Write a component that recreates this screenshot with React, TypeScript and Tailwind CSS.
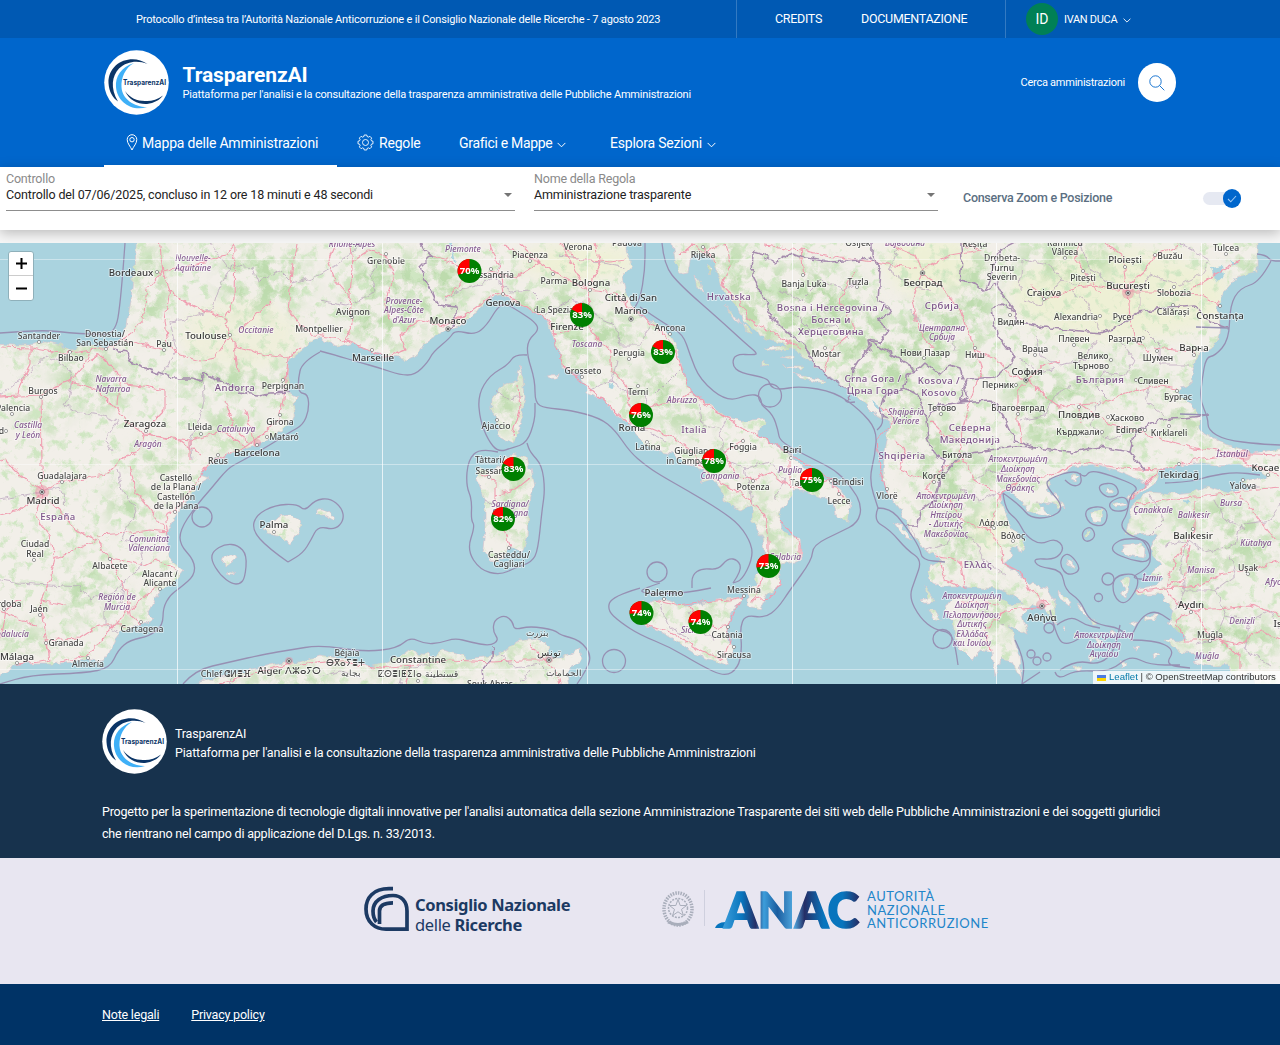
import React from "react";

const LAND = [
  // France, Iberia and the Italian peninsula
  "M136 230L134 270L131 300L127 325L122 337L115 346L106 348L94 345L80 347L70 351L60 345L45 341L30 345L15 345L-10 344L-10 680L10 671L15 664L50 664L73 662L88 659L102 662L108 654L115 639L122 630L143 624L152 619L147 614L155 599L160 590L173 584L184 570L170 559L168 549L167 534L173 520L183 505L197 487L202 482L209 478L200 475L210 465L213 460L233 453L257 445L273 437L290 423L295 413L293 403L298 398L289 393L286 373L288 360L300 352L315 340L320 338L337 347L353 343L370 350L383 355L407 360L418 355L420 348L433 338L447 330L463 323L477 312L487 300L503 295L517 303L535 312L547 320L553 337L560 350L562 367L577 373L585 383L587 393L603 400L613 413L627 423L638 437L648 447L660 452L673 454L682 463L693 467L703 470L706 477L699 483L712 479L722 490L723 500L740 510L752 505L753 522L762 537L764 552L762 565L755 577L758 584L748 592L748 606L760 609L767 595L780 584L782 565L802 560L800 539L780 530L778 517L787 502L793 490L803 490L820 497L833 502L835 514L847 521L851 504L840 490L823 479L800 465L792 457L773 443L757 435L757 430L767 423L763 418L743 422L728 418L712 407L690 392L683 370L677 347L670 335L653 322L640 317L633 307L625 290L622 277L632 267L627 250L627 230Z",
  // Balkans, Greece, Anatolia
  "M670 230L672 243L675 260L682 273L688 272L690 260L700 253L713 260L717 273L723 290L737 307L743 320L763 337L783 343L800 353L817 368L840 383L857 397L873 413L890 423L887 440L884 457L883 475L887 492L900 509L907 524L913 532L923 549L943 560L930 565L928 579L942 587L960 587L997 589L1012 595L1024 603L1010 604L997 597L975 595L952 598L944 610L952 620L955 635L960 649L973 662L980 649L992 652L995 677L1001 659L1012 662L1022 681L1019 655L1015 642L1010 625L1027 634L1022 615L1033 604L1045 608L1056 625L1054 600L1047 588L1030 584L1017 573L1003 563L1012 558L1010 545L1022 553L1026 545L1013 529L1003 509L1000 495L1007 489L1020 499L1028 511L1053 517L1037 502L1052 504L1064 508L1056 495L1047 490L1050 480L1073 467L1093 465L1117 470L1148 484L1132 494L1128 500L1156 483L1160 469L1200 462L1215 465L1237 464L1260 470L1268 476L1256 480L1240 483L1260 486L1227 492L1205 486L1193 492L1173 494L1147 492L1132 505L1127 535L1157 534L1149 549L1160 565L1149 575L1163 578L1157 586L1135 590L1136 594L1160 594L1173 609L1168 625L1188 637L1180 641L1165 640L1180 653L1210 654L1193 662L1213 666L1227 665L1237 679L1250 672L1265 700L1300 700L1300 449L1280 449L1253 453L1223 443L1200 430L1200 417L1190 403L1177 393L1180 387L1192 383L1193 370L1197 355L1217 343L1220 327L1218 307L1223 293L1237 277L1257 272L1257 230Z",
  // North Africa
  "M190 700L200 682L220 677L253 669L283 662L300 662L320 655L347 659L360 662L370 667L383 664L403 654L410 649L420 654L437 655L443 649L460 654L467 659L497 655L507 649L520 640L537 638L550 647L547 659L560 659L580 649L582 659L567 672L570 700Z",
  // Sicily, Corsica, Sardinia
  "M655 600L648 604L642 599L632 605L632 615L640 625L653 627L677 642L692 652L707 659L720 662L727 665L728 659L735 649L728 640L728 629L730 615L743 597L720 599L697 605L680 605L667 600Z",
  "M520 365L523 380L525 397L520 427L513 444L500 437L497 420L492 410L492 397L503 385L517 380Z",
  "M513 453L527 458L530 469L534 487L528 509L527 539L522 552L510 547L502 559L492 562L483 549L485 529L485 499L477 479L480 469L493 472Z",
  // Balearics
  "M263 530L277 517L290 515L303 524L290 545L277 535Z",
  "M317 509L324 509L333 515L334 520L325 515L317 515Z",
  "M223 559L235 554L237 558L227 566L222 563Z",
  "M228 573L230 571L235 574L230 574Z",
  "M546 376L558 374L556 378L548 379Z",
  // Ionian and Aegean islands
  "M893 522L900 524L912 540L904 537Z",
  "M920 600L927 598L925 586L930 596L935 603L924 603Z",
  "M929 610L935 610L941 620L934 618Z",
  "M1073 474L1079 476L1077 482L1072 480Z",
  "M1105 488L1112 488L1114 492L1106 492Z",
  "M1113 503L1122 501L1126 505L1116 507Z",
  "M1090 513L1103 511L1102 522L1092 521Z",
  "M1086 533L1089 532L1089 537L1086 537Z",
  "M1123 545L1140 543L1145 550L1144 559L1129 556L1121 551Z",
  "M1120 580L1129 578L1126 597L1121 594L1124 587Z",
  "M1067 558L1071 561L1075 568L1069 565Z",
  "M1077 605L1083 608L1089 617L1082 613Z",
  "M1090 618L1098 623L1093 624Z",
  "M1145 617L1158 614L1156 619L1146 620Z",
  "M1129 624L1138 622L1134 627Z",
  "M1057 590L1072 602L1070 607L1058 597Z",
  "M1064 624L1067 630L1063 627ZM1075 633L1080 637L1076 638ZM1095 638L1103 642L1098 647ZM1110 630L1117 633L1111 636ZM1136 645L1140 648L1135 650ZM1153 654L1160 655L1154 659ZM1090 655L1096 659L1089 662ZM1120 660L1128 664L1121 667ZM1075 665L1083 668L1076 671Z",
  // Dalmatian islands
  "M695 275L699 281L704 296L698 287ZM706 262L713 270L711 275ZM725 305L741 325L735 320ZM742 322L752 333L746 331ZM765 349L790 346L790 350L770 352ZM780 357L794 356L794 359ZM782 366L804 366L801 369ZM794 374L825 381L822 384L800 378ZM762 362L768 364L762 366ZM910 525L917 540L911 534Z",
];

const WATER =
  "M872 402L880 405L884 412L876 408ZM1212 268L1222 266L1224 276L1216 283ZM1110 476L1116 474L1116 478ZM448 243L454 262L456 262L451 243ZM610 382L614 383L613 388L609 386ZM1036 613L1040 613L1038 616ZM1230 260L1238 262L1234 266ZM1182 500L1190 501L1185 504Z";

const BORDERS = [
  "M113 350L127 352L130 362L150 370L163 375L175 378L192 378L201 381L203 373L225 382L240 392L256 395L270 393L290 392",
  "M413 230L424 250L432 256L420 268L430 288L438 305L456 307L456 320L448 330",
  "M753 252L764 255L775 263L790 253L800 257L830 262L860 260L870 258L880 270L878 300L892 312L878 320L888 330L880 342L868 340L870 350L858 360L852 370L848 390L850 400",
  "M753 252L752 275L765 300L770 315L785 330L805 345L812 362L830 378L848 390",
  "M868 340L885 350L910 365L915 372L906 376L905 388L885 395L880 410L887 420",
  "M915 372L925 362L940 375L950 365L960 368L968 398L960 402",
  "M960 402L940 405L926 418L928 440L935 455L945 460L940 480L935 500L920 510L918 525L907 525",
  "M905 388L918 395L926 418",
  "M940 480L960 455L990 450L1015 447L1035 448",
  "M960 402L990 400L1003 415L1015 440L1035 448L1070 452L1100 447L1130 452L1135 432L1160 420L1185 418L1208 415",
  "M872 230L872 255L880 270",
  "M960 402L966 380L995 378L1015 358L997 335L992 310L1000 303L1016 312L1016 322L1050 328L1100 333L1118 327L1140 312L1170 307L1195 305L1210 322L1228 328",
  "M960 280L975 283L985 291L997 284L1003 296L1016 312",
  "M960 230L962 260L960 280",
  "M493 646L492 658L482 670L484 690",
  "M1130 452L1140 465L1145 470",
  "M1020 240L1000 250L985 291",
];

const REGIONS = [
  "M210 243L230 270L232 265L218 290L212 310L185 320L170 322L176 350L162 375",
  "M232 265L253 268L258 283L280 270L293 283L320 275L345 260L360 243",
  "M203 373L204 400L198 425L190 440L192 460",
  "M0 395L30 372L45 355L65 365L72 378L68 400L65 405L80 412L100 415L118 420L105 440L112 452",
  "M0 500L25 495L60 488L66 505M118 470L122 490L135 510L122 540L140 545L143 565L125 580L118 590L90 600L80 587L50 585L20 583L0 580",
  "M125 580L122 600L105 610L105 625L118 633",
  "M320 300L345 305L360 300L375 290L370 275L380 262",
  "M500 260L495 280L510 292L530 290L540 300M495 275L480 285L460 290L445 300M560 255L600 262L625 268M545 315L570 300L590 305L600 320L615 325L620 345L640 345L650 325",
  "M590 390L612 380L617 360M612 380L625 392L645 395L650 410L640 428L665 440M655 395L665 385L680 370M700 405L702 425L720 430L728 418M720 430L725 460L745 468L750 490L752 505M745 468L770 462L785 480L775 500",
  "M690 612L700 630L715 640M660 605L668 625L690 640",
  "M780 290L800 300L820 280L845 290L860 280M790 310L810 330L835 325L850 340M900 243L890 270L910 285L930 290M910 310L925 330L950 330L955 350",
  "M1020 290L1022 260L1050 265L1062 280L1080 285L1090 270L1080 243M1070 290L1085 300L1100 330M1062 280L1040 305L1025 300M1090 270L1115 285L1140 290L1150 275L1180 285L1200 275L1210 260L1180 243M1140 290L1140 312M1120 340L1135 360L1125 375L1105 372L1095 385L1110 400M1035 335L1040 355L1060 365L1085 360L1095 340M1145 330L1160 345L1160 365L1190 365M1018 358L1040 372L1055 368M1100 400L1090 425L1110 440L1130 432M1150 380L1145 400L1165 415M1020 420L1045 415L1055 395L1070 385",
  "M1150 495L1165 520L1150 535M1165 545L1190 540L1205 552L1235 545L1240 525L1270 520L1280 505M1190 540L1180 560L1185 590L1215 590L1235 575L1230 555M1185 590L1175 610M1215 590L1225 615L1250 620L1270 610L1280 630M1225 615L1215 640L1195 645M1215 500L1225 520L1245 530M1250 620L1245 650L1270 665",
  "M960 490L980 500L1000 492M925 550L945 545L955 530L975 540L985 560L1005 575M960 620L985 612L1005 625M975 480L990 470L1010 475",
  "M230 684L235 672M320 676L340 670L360 678M400 684L405 668L430 665M500 655L515 668L540 664L552 676M520 684L530 670",
  "M485 500L500 508L528 505M495 390L510 400L522 395",
];

const ROADS = [
  "M158 230L163 272L147 290L143 320L130 335L113 346",
  "M163 272L170 290L185 302L205 312L225 318L230 335L238 348L265 355L287 358L300 348",
  "M170 290L165 320L168 345L180 355L200 361L215 358L230 335M125 340L165 350",
  "M163 272L180 268L225 255L235 243L234 300L225 318M240 330L270 302M297 243L292 270L288 310L300 325L315 335L345 340",
  "M235 345L238 372M287 358L285 380L284 400L280 418L262 435L245 447L225 455L213 462",
  "M0 347L30 348L60 353L80 352L100 348L113 348M30 345L30 365L20 385L18 395L0 396",
  "M88 352L85 365L72 380L50 388L42 395L0 397M72 382L100 392L115 407L125 420L145 435L190 440L225 432L245 447M88 362L100 355L120 375L117 405",
  "M145 430L165 410L165 390L145 386L125 384M145 432L140 450L120 460L105 475L60 482L43 492",
  "M43 492L42 465L41 395M43 492L20 475L5 460L0 462M43 492L20 510L0 515M43 492L35 515L50 535L55 558L50 580L40 600L45 630L50 660L40 662L15 664",
  "M43 495L60 510L75 530L97 540L110 558L118 575L128 595L130 615L142 625M97 535L130 533L150 530L168 532M55 558L75 550L97 540M110 558L145 565L155 560L180 572",
  "M168 535L165 515L175 510L195 485L210 462M130 465L135 490L150 510L165 530M145 435L180 440L200 455M190 440L190 460",
  "M158 585L140 600L120 620L100 640L88 655L60 662M45 640L80 638L100 625L125 625M0 610L20 620L35 625M45 640L48 655M40 600L65 605M20 600L5 610L0 640",
  "M245 410L252 430L255 445M225 400L235 430L250 443",
  "M350 243L352 270L350 295L352 325L345 340L370 350L385 358L405 350L400 335L420 320L445 325L470 312M335 243L328 260L335 280L352 300M387 257L370 250L352 262M387 257L395 275L385 300L390 320",
  "M469 271L450 262L430 255M469 271L490 272L515 278L540 262L530 260L505 245M469 271L455 290L445 298M503 293L500 270L490 245M503 293L490 297L475 308L455 322M503 293L520 303L548 320L555 335L570 330L582 320L590 300L587 290L560 275L540 262L520 243",
  "M587 290L615 293L630 308L650 322L665 335L675 350L683 370L690 390L710 408L730 420L745 430L775 443L792 455L820 472L840 485",
  "M587 290L600 265L595 243M587 290L575 270L565 250M560 243L575 258L610 262L625 260M582 320L595 335L610 350L612 370L625 385L632 410L630 425L615 412L600 398L580 380L563 365L556 345L553 330",
  "M632 420L650 428L672 437L692 450L700 465L715 480L735 490L750 500L765 515L768 540L768 560L762 580L752 600L770 598L782 580",
  "M700 465L725 452L745 440M632 415L655 405L680 400L690 392M725 452L735 475L750 480L770 472L790 487L810 488L830 480L845 500M790 460L790 487M778 520L790 530L800 545L800 560",
  "M655 600L675 605L700 602L730 600L743 597L735 610L728 625L730 640L725 655M690 605L695 620L715 628L728 625M640 605L640 622L670 632L700 650L722 660",
  "M482 475L495 480L495 500L502 525L510 547M495 495L515 490L530 478M518 385L520 410L512 435",
  "M694 243L703 253L725 243M694 243L680 255M725 243L730 265L722 285L738 300L750 320L775 335L800 348M703 247L715 262",
  "M765 245L800 250L840 258L875 262L915 268M922 270L950 255L980 250L960 243M922 270L915 255L885 243M922 274L912 300L918 330L935 350M922 274L940 285L960 310L975 350L982 370L970 400L962 430L960 455L975 480L1000 495M803 275L800 250M845 310L855 330L830 350L825 372M855 330L840 300L855 270",
  "M975 350L995 358L1010 375L1027 380L1050 400L1060 407L1080 404L1105 402L1130 392L1160 385L1177 388M1027 380L1045 365L1060 362M1027 380L1018 390L1018 420L1022 445M1080 404L1110 425L1140 432L1165 440L1195 448L1230 453L1280 455M1155 348L1195 352M1078 407L1080 425",
  "M1045 300L1070 290L1090 285L1130 292L1165 292L1200 295L1220 305M1045 298L1030 285M1128 292L1125 270L1122 255L1105 243M1128 292L1130 318L1135 340L1150 352M1128 285L1150 265L1155 255L1180 245M1100 293L1090 278L1075 260L1080 243M1190 290L1215 275L1240 260",
  "M960 460L940 470L925 490L950 500L960 520L990 530L1000 495M990 530L1000 545L1003 563L1020 572L1030 590L1050 605L1035 608L1005 610L985 630L990 650M1000 495L1020 480L1050 475L1080 462L1120 468L1160 470L1195 460L1230 455M960 587L945 580L940 560M935 555L960 560L965 590M960 602L1000 604",
  "M1130 500L1150 480L1160 470M1135 505L1165 500L1195 497L1230 494L1250 490L1280 487M1195 500L1195 530L1175 560L1165 590L1180 605L1195 610L1230 608L1250 605L1280 615M1135 592L1165 588L1200 585L1220 575L1250 570L1280 560M1190 545L1185 580L1168 585M1190 612L1175 620L1185 640L1215 640L1240 645L1260 630L1280 640M1240 495L1260 520L1275 540M1230 453L1250 465L1280 475M1195 610L1205 630L1240 655L1240 670",
  "M877 440L880 470L888 495M877 440L895 420L880 405M930 420L945 435L960 440M895 440L905 450L900 470L925 480",
  "M290 663L260 672L220 684M300 665L325 662L345 662L380 668L410 665L450 660L495 662L520 660L545 660L555 668L560 684M545 660L530 645M410 665L405 684",
];

const MARITIME = [
  "M125 243L121 300L115 335L90 334L70 333L45 330L0 333",
  "M320 352L302 362L298 380L299 393L308 394L309 410L303 425L290 432L270 445L240 462L228 468L210 490L195 507L180 530L180 545L194 560L195 575L180 588L170 595L163 608L163 625L150 636L130 640L118 650L110 668L85 673L30 675L0 684",
  "M320 351L335 355L358 362L380 368L400 375L415 375L428 362L433 352L450 338L455 330L475 335L487 325L497 308L505 303L520 312L535 322L539 330L528 340L527 355L535 380L535 403L545 408L570 410L600 418L615 430L630 452L645 465L660 475L690 492L720 510L740 525L752 545L752 560L742 580L733 583",
  "M527 355L515 354L508 365L490 375L478 395L480 420L488 440L498 452L512 448L527 443L535 420L535 403",
  "M498 452L480 448L468 460L466 485L472 500L471 520L475 526L467 550L480 570L500 575L515 568L532 562L538 550L542 510L545 490L542 465L530 452L527 443",
  "M288 562L268 548L252 530L256 515L275 505L297 504L305 511L315 500L330 498L342 508L344 520L335 530L318 526L311 540L303 553L288 562",
  "M232 584L220 575L211 560L213 551L225 544L238 545L247 555L245 578L240 584Z",
  "M183 684L195 670L230 662L265 654L290 650L320 645L365 652L398 648L410 637L425 644L440 643L455 638L470 642L490 646L499 640L493 632L494 620L505 615L513 622L514 630L530 626L555 630L560 635L580 640L592 656L585 672L577 684",
  "M660 583L645 588L640 592L655 594L685 593L711 588M733 583L742 570L738 560L728 558L718 570L702 568L692 575L692 588",
  "M640 588L612 596L607 610L620 622L640 635L670 647L700 665L725 677L738 668L742 650L740 628L745 615L765 618L778 608L790 590L812 560L813 545L840 532L858 523L862 505L850 485L835 470L815 460L780 442L778 430L773 415L762 405",
  "M635 307L640 300L645 270L645 243M662 243L664 265L680 285L720 320L745 343L757 353L755 355L735 354L732 365L740 373L768 378L770 386L778 390L800 386L835 392L860 410L877 430L875 455L869 480L878 508",
  "M640 307L665 324L683 334L690 355L700 380L727 402L750 394L760 396L762 405M855 402L848 403L845 400",
  "M877 430L883 425L882 415M878 508L873 520L890 530L907 550L922 560L915 580L909 597L920 618L935 630L950 632L955 645L958 665M878 508L890 508L905 525L920 548L922 560L945 562",
  "M1003 493L1005 510L1018 520L1025 535L1040 545L1055 538L1065 548L1055 560L1033 558L1038 567L1062 570L1065 590L1080 600L1088 618L1100 625L1120 628L1130 640L1140 618L1155 610L1170 620M1003 493L1020 505L1030 518L1050 518L1065 508L1045 485L1050 478L1075 470L1085 478L1090 470L1110 475L1140 487L1130 495L1127 515L1120 525L1128 535L1145 540L1152 560L1145 570L1130 578L1150 580",
  "M1065 480L1072 487L1082 484L1080 473M1100 484L1115 483L1120 495L1107 498L1099 490ZM1108 502L1126 495L1130 510L1112 512ZM1084 508L1108 506L1106 527L1088 524ZM1082 531L1091 526L1096 536L1089 542L1083 540ZM1113 544L1125 538L1150 540L1151 563L1130 560L1112 552ZM1113 576L1136 573L1139 586L1125 606L1113 596ZM1062 556L1070 553L1082 570L1068 576L1060 566Z",
  "M1057 625L1070 615L1085 625L1100 628M1015 640L1025 660L1022 684M1050 610L1057 640L1068 645L1085 635M1060 670L1075 660L1100 665L1115 650L1120 625M1130 640L1155 640L1175 650L1165 665L1190 668M1055 672L1058 680L1075 670L1110 672L1130 655L1150 665L1180 665",
  "M1257 254L1266 255L1271 261L1280 261M1271 261L1260 282L1240 288L1230 305L1229 340L1215 356L1206 357L1202 380L1200 400L1208 418L1208 430L1225 440L1260 444L1280 445M1196 327L1229 328M1208 415L1180 414",
  "M1165 483L1190 482L1210 476L1235 472L1260 475M1022 684L1040 672",
];

const CIRCLES: [number, number, number][] = [
  [202, 517, 10], [657, 572, 10], [770, 395.5, 11.5], [614, 661, 11.5], [942.5, 639, 9.5],
  [1108, 579, 6], [1098.5, 597.5, 4], [1031, 654, 4], [1037, 661, 4], [1047, 657, 4], [1049, 628, 5],
];

type Kind = "c" | "b" | "r" | "n";
const LABELS: [string, number, number, Kind][] = [
  ["Bordeaux", 131, 276, "b"], ["Nouvelle-", 193, 261, "r"], ["Aquitaine", 193, 271, "r"], ["Toulouse", 206, 339, "b"],
  ["Occitanie", 256, 333, "r"], ["Montpellier", 319, 332, "c"], ["Santander", 39, 339, "c"], ["Donostia/", 105, 337, "c"],
  ["San Sebastián", 105, 346, "c"], ["Bilbao", 71, 361, "c"], ["Pau", 164, 347, "c"], ["Navarra", 111, 382, "r"],
  ["Nafarroa", 113, 392, "r"], ["Andorra", 235, 391, "n"], ["Perpignan", 283, 389, "c"], ["Burgos", 43, 394, "c"],
  ["Palencia", 13, 411, "c"], ["Castilla", 28, 428, "r"], ["y León", 28, 438, "r"], ["Valladolid", -16, 434, "c"],
  ["Zaragoza", 145, 427, "b"], ["Lleida", 200, 430, "c"], ["Catalunya", 236, 432, "r"], ["Girona", 280, 425, "c"],
  ["Aragón", 148, 447, "r"], ["Mataró", 284, 440, "c"], ["Barcelona", 257, 456, "b"], ["Reus", 218, 464, "c"],
  ["Guadalajara", 62, 479, "c"], ["Castelló", 176, 481, "c"], ["de la Plana /", 176, 490, "c"], ["Castellón", 176, 500, "c"],
  ["de la Plana", 176, 509, "c"], ["Madrid", 43, 504, "b"], ["España", 58, 520, "n"], ["Palma", 274, 528, "b"],
  ["Comunitat", 149, 542, "r"], ["Valenciana", 149, 551, "r"], ["Ciudad", 35, 547, "c"], ["Real", 35, 557, "c"],
  ["Albacete", 110, 569, "c"], ["Alacant /", 160, 577, "c"], ["Alicante", 160, 586, "c"], ["Región de", 117, 600, "r"],
  ["Murcia", 117, 610, "r"], ["Córdoba", 4, 607, "c"], ["Jaén", 39, 612, "c"], ["Andalucía", 10, 637, "r"],
  ["Cartagena", 142, 632, "c"], ["Granada", 66, 646, "c"], ["Málaga", 17, 660, "b"], ["Almería", 88, 667, "c"],
  ["Béjaïa", 347, 656, "c"], ["ⴱⴳⴰⵢⴻⵜ", 345, 666, "c"], ["بجاية", 351, 676, "c"], ["Alger ⴷⵣⴰⵢⵔ", 289, 674, "b"],
  ["Chlef ⵛⵍⴻⴼ", 226, 677, "c"], ["Constantine", 418, 663, "b"], ["ⵇⵙⴻⵏⵟⵉⵏⴰ قسنطينة", 418, 677, "c"], ["بنزرت", 537, 636, "c"],
  ["تونس", 549, 656, "b"], ["الحمامات", 564, 676, "c"], ["Souk Ahras", 490, 687, "c"],
  ["Rhône-Alpes", 352, 247, "r"], ["Grenoble", 386, 264, "c"], ["Piemonte", 463, 252, "r"], ["Piacenza", 530, 258, "c"],
  ["Verona", 578, 250, "c"], ["Padova", 627, 246, "c"], ["Alessandria", 490, 278, "c"], ["Parma", 554, 284, "c"],
  ["Bologna", 591, 286, "b"], ["Genova", 503, 306, "b"], ["Provence-", 404, 304, "r"], ["Alpes-Côte", 404, 313, "r"],
  ["d'Azur", 404, 323, "r"], ["Avignon", 353, 315, "c"], ["Monaco", 448, 324, "b"], ["Marseille", 373, 361, "b"],
  ["La Spezia", 555, 313, "c"], ["Firenze", 567, 330, "b"], ["Toscana", 587, 347, "r"], ["Città di San", 631, 301, "b"],
  ["Marino", 631, 314, "b"], ["Perugia", 629, 356, "c"], ["Grosseto", 583, 374, "c"], ["Terni", 638, 395, "c"],
  ["Ancona", 670, 331, "c"], ["Abruzzo", 682, 403, "r"], ["Roma", 632, 431, "b"], ["Italia", 694, 433, "n"],
  ["Latina", 648, 450, "c"], ["Ajaccio", 496, 429, "c"], ["Tàttari/", 490, 463, "c"], ["Sassari", 490, 474, "c"],
  ["Sardigna/", 510, 507, "r"], ["Sardegna", 510, 516, "r"], ["Casteddu/", 509, 558, "c"], ["Cagliari", 509, 567, "c"],
  ["Giugliano", 694, 454, "c"], ["in Campania", 692, 464, "c"], ["Campania", 720, 479, "r"], ["Foggia", 743, 450, "c"],
  ["Bari", 792, 453, "b"], ["Puglia", 790, 473, "r"], ["Potenza", 753, 490, "c"], ["Taranto", 806, 486, "c"],
  ["Brindisi", 848, 485, "c"], ["Lecce", 839, 504, "c"], ["Calabria", 785, 560, "r"], ["Palermo", 664, 596, "b"],
  ["Messina", 744, 593, "c"], ["Sicilia", 692, 633, "r"], ["Catania", 727, 638, "c"], ["Siracusa", 734, 658, "c"],
  ["Rijeka", 703, 258, "c"], ["Hrvatska", 729, 300, "n"], ["Banja Luka", 804, 287, "c"], ["Tuzla", 858, 285, "c"],
  ["Osijek", 858, 246, "c"], ["Војводина", 905, 246, "r"], ["Београд", 923, 286, "b"], ["Bosna i Hercegovina /", 831, 311, "n"],
  ["Босна и", 831, 323, "n"], ["Херцеговина", 831, 335, "n"], ["Србија", 942, 309, "n"], ["Централна", 942, 331, "r"],
  ["Србија", 942, 340, "r"], ["Mostar", 826, 357, "c"], ["Нови Пазар", 925, 356, "c"], ["Crna Gora /", 873, 382, "n"],
  ["Црна Гора", 873, 394, "n"], ["Kosova /", 939, 384, "n"], ["Kosovo", 939, 396, "n"], ["Тетово", 942, 411, "c"],
  ["Shqipëria", 906, 415, "r"], ["Veriore", 906, 424, "r"], ["Северна", 970, 431, "n"], ["Македонија", 970, 443, "n"],
  ["Shqipëria", 902, 459, "n"], ["Битола", 957, 458, "c"], ["Korçë", 934, 479, "c"], ["Vlorë", 887, 499, "c"],
  ["Αποκεντρωμένη", 946, 499, "r"], ["Διοίκηση", 946, 508, "r"], ["Ηπείρου", 946, 518, "r"], ["- Δυτικής", 946, 527, "r"],
  ["Μακεδονίας", 946, 537, "r"], ["Λάρισα", 994, 526, "c"], ["Βόλος", 1013, 539, "c"], ["Ελλάς", 978, 568, "n"],
  ["Αποκεντρωμένη", 972, 599, "r"], ["Διοίκηση", 972, 608, "r"], ["Πελοποννήσου,", 972, 618, "r"], ["Δυτικής", 972, 627, "r"],
  ["Ελλάδας", 972, 637, "r"], ["και Ιονίου", 972, 646, "r"], ["Αθήνα", 1042, 621, "b"], ["Αποκεντρωμένη", 1104, 638, "r"],
  ["Διοίκηση", 1104, 648, "r"], ["Αιγαίου", 1104, 657, "r"], ["Αποκεντρωμένη", 1018, 462, "r"], ["Διοίκηση", 1018, 472, "r"],
  ["Μακεδονίας", 1018, 482, "r"], ["Θράκης", 1020, 491, "r"],
  ["Reșița", 975, 247, "c"], ["Drobeta-", 1002, 261, "c"], ["Turnu", 1002, 271, "c"], ["Severin", 1002, 280, "c"],
  ["Râmnicu", 1065, 246, "c"], ["Vâlcea", 1065, 255, "c"], ["Ploiești", 1125, 263, "b"], ["Buzău", 1170, 259, "c"],
  ["Tulcea", 1226, 251, "c"], ["Pitești", 1083, 281, "c"], ["București", 1128, 289, "b"], ["Craiova", 1044, 296, "b"],
  ["Slobozia", 1174, 296, "c"], ["Călărași", 1173, 315, "c"], ["Constanța", 1220, 319, "b"], ["Видин", 1011, 325, "c"],
  ["Alexandria", 1076, 320, "c"], ["Русе", 1122, 320, "c"], ["Плевен", 1074, 342, "c"], ["Разград", 1125, 342, "c"],
  ["Враца", 1035, 352, "c"], ["Варна", 1194, 351, "b"], ["Ниш", 975, 358, "c"], ["Велико", 1093, 359, "c"],
  ["Търново", 1091, 369, "c"], ["Шумен", 1158, 361, "c"], ["София", 1027, 375, "b"], ["Перник", 998, 388, "c"],
  ["България", 1100, 383, "n"], ["Сливен", 1153, 384, "c"], ["Бургас", 1178, 400, "c"], ["Благоевград", 1018, 411, "c"],
  ["Пловдив", 1079, 418, "b"], ["Хасково", 1127, 421, "c"], ["Кърджали", 1078, 435, "c"], ["Edirne", 1129, 433, "c"],
  ["Kırklareli", 1169, 436, "c"], ["İstanbul", 1232, 457, "r"], ["Tekirdağ", 1179, 478, "b"], ["Kocaeli", 1268, 471, "b"],
  ["Yalova", 1243, 489, "c"], ["Çanakkale", 1153, 513, "r"], ["Bursa", 1231, 506, "r"], ["Balıkesir", 1194, 518, "r"],
  ["Balıkesir", 1193, 539, "b"], ["Kütahya", 1256, 546, "r"], ["Manisa", 1201, 573, "r"], ["Uşak", 1248, 571, "c"],
  ["İzmir", 1152, 581, "r"], ["Afyon", 1276, 585, "r"], ["Aydın", 1191, 608, "b"], ["Denizli", 1242, 624, "r"],
  ["Isparta", 1290, 627, "b"], ["Muğla", 1210, 638, "c"], ["Muğla", 1207, 659, "r"],
];

const DOTS: [number, number][] = [
  [157, 272], [230, 335], [39, 342], [70, 352], [106, 349], [164, 350], [283, 380], [41, 397], [12, 414], [6, 431],
  [146, 431], [201, 434], [280, 415], [267, 437], [257, 445], [218, 455], [62, 482], [175, 512], [274, 532], [34, 560],
  [110, 559], [160, 589], [4, 609], [40, 615], [141, 622], [46, 643], [17, 663], [88, 658], [386, 254], [491, 269],
  [530, 261], [553, 274], [590, 290], [503, 294], [352, 317], [372, 350], [536, 310], [629, 359], [582, 377], [638, 386],
  [670, 334], [647, 442], [497, 420], [489, 477], [509, 548], [743, 441], [791, 458], [753, 481], [831, 481], [839, 494],
  [664, 599], [744, 596], [728, 627], [734, 647], [703, 247], [803, 275], [857, 287], [825, 348], [924, 358], [941, 414],
  [934, 482], [887, 489], [994, 528], [1013, 541], [1065, 258], [1125, 267], [1155, 255], [1226, 254], [1083, 271],
  [1044, 299], [1174, 287], [1173, 305], [1220, 306], [1010, 315], [1100, 316], [1074, 345], [1143, 338], [1035, 355],
  [1194, 355], [975, 348], [1111, 360], [1157, 351], [1016, 385], [1136, 380], [1177, 391], [1018, 414], [1079, 407],
  [1108, 417], [1102, 432], [1145, 430], [1169, 426], [1179, 464], [1268, 475], [1243, 480], [1193, 529], [1248, 574],
  [1191, 612], [1210, 641], [418, 681],
];

const CAPITALS: [number, number][] = [[42, 492], [448, 329], [631, 319], [922.5, 273], [1128, 293], [1026, 380], [1042, 606], [289, 661], [549, 660]];

const GREENS: [number, number, number, number][] = [
  [150, 290, 18, 45], [225, 380, 55, 16], [265, 280, 45, 35], [385, 300, 45, 50], [300, 385, 22, 30], [95, 385, 40, 25],
  [60, 350, 50, 12], [440, 280, 30, 35], [545, 300, 45, 16], [575, 345, 20, 30], [610, 335, 25, 25], [655, 390, 22, 25],
  [690, 420, 28, 14], [508, 400, 14, 35], [515, 500, 14, 45], [700, 605, 35, 9], [770, 520, 16, 20], [775, 565, 12, 30],
  [85, 580, 20, 25], [75, 605, 14, 18], [130, 505, 22, 25], [40, 420, 20, 15], [720, 265, 30, 30], [800, 310, 70, 45],
  [870, 350, 35, 40], [930, 340, 35, 40], [975, 300, 20, 50], [1065, 260, 50, 20], [1050, 395, 45, 25], [1100, 375, 65, 12],
  [1090, 440, 55, 12], [1040, 430, 20, 22], [1185, 405, 22, 20], [1250, 262, 16, 20], [905, 400, 22, 40], [940, 460, 30, 40],
  [960, 530, 20, 50], [990, 470, 30, 18], [1215, 515, 50, 16], [1250, 545, 35, 20], [1200, 575, 30, 20], [1240, 640, 40, 25],
  [290, 675, 50, 12], [420, 665, 60, 12], [520, 658, 30, 10], [1000, 610, 25, 25], [1180, 630, 20, 15], [160, 460, 25, 18],
  [230, 430, 28, 22], [20, 640, 25, 14], [120, 610, 15, 15], [735, 490, 25, 15], [1210, 430, 25, 12], [1140, 510, 14, 14],
];

const LABEL_CLASS: Record<Kind, string> = {
  c: "fill-[#484848] text-[8.6px]",
  b: "fill-[#383838] text-[9.7px]",
  r: "fill-[#855a91] text-[8.4px] italic",
  n: "fill-[#7d5589] text-[9.6px] tracking-[0.42px]",
};

const MARKERS: [number, number, number][] = [
  [469.5, 271, 70], [582, 315, 83], [663, 352, 83], [641, 415, 76], [513.5, 469, 83], [714, 461, 78],
  [812, 480, 75], [503, 519, 82], [768.5, 566, 73], [641.5, 613, 74], [700.5, 622, 74],
];

function slice(cx: number, cy: number, pct: number) {
  const a = (pct / 100) * 2 * Math.PI;
  const r = 12;
  return `M${cx} ${cy}L${cx + r * Math.sin(a)} ${cy - r * Math.cos(a)}A${r} ${r} 0 0 1 ${cx} ${cy - r}Z`;
}

// Rounds the corners of a polyline path with quadratic curves through the segment midpoints.
function smooth(d: string) {
  return d
    .split("M")
    .filter(Boolean)
    .map((part) => {
      const closed = part.endsWith("Z");
      const pts = part.replace("Z", "").split("L").map((p) => p.trim().split(" ").map(Number));
      const mid = (a: number[], b: number[]) => `${(a[0] + b[0]) / 2} ${(a[1] + b[1]) / 2}`;
      if (closed) {
        const n = pts.length;
        let s = `M${mid(pts[n - 1], pts[0])}`;
        for (let i = 0; i < n; i++) s += `Q${pts[i][0]} ${pts[i][1]} ${mid(pts[i], pts[(i + 1) % n])}`;
        return s + "Z";
      }
      let s = `M${pts[0].join(" ")}`;
      for (let i = 1; i < pts.length - 1; i++) s += `Q${pts[i].join(" ")} ${mid(pts[i], pts[i + 1])}`;
      return s + `L${pts[pts.length - 1].join(" ")}`;
    })
    .join("");
}

function RegionMap() {
  return (
    <svg viewBox="0 243 1280 441" className="block h-[441px] w-full bg-[#aad3df]" preserveAspectRatio="none">
      <defs>
        <clipPath id="land">
          {LAND.map((d, i) => <path key={i} d={d} />)}
        </clipPath>
        <filter id="rough" filterUnits="userSpaceOnUse" x="-20" y="230" width="1320" height="470" colorInterpolationFilters="sRGB">
          <feTurbulence type="fractalNoise" baseFrequency="0.13" numOctaves="2" seed="4" result="n" />
          <feDisplacementMap in="SourceGraphic" in2="n" scale="7" xChannelSelector="R" yChannelSelector="G" />
        </filter>
        <filter id="forest" filterUnits="userSpaceOnUse" x="-20" y="230" width="1320" height="470" colorInterpolationFilters="sRGB">
          <feTurbulence type="fractalNoise" baseFrequency="0.07" numOctaves="5" seed="11" />
          <feColorMatrix values="0 0 0 0 0.74  0 0 0 0 0.86  0 0 0 0 0.68  0 4 0 0 -1.65" result="t" />
          <feComposite in="t" in2="SourceGraphic" operator="in" />
        </filter>
        <filter id="fields" filterUnits="userSpaceOnUse" x="-20" y="230" width="1320" height="470" colorInterpolationFilters="sRGB">
          <feTurbulence type="fractalNoise" baseFrequency="0.1" numOctaves="4" seed="23" />
          <feColorMatrix values="0 0 0 0 0.81  0 0 0 0 0.90  0 0 0 0 0.76  0 4.5 0 0 -2.45" result="t" />
          <feComposite in="t" in2="SourceGraphic" operator="in" />
        </filter>
        <filter id="soft" filterUnits="userSpaceOnUse" x="-20" y="230" width="1320" height="470">
          <feGaussianBlur stdDeviation="9" />
        </filter>
      </defs>
      <g filter="url(#rough)">
        {LAND.map((d, i) => <path key={i} d={d} fill="#f2efe9" stroke="#d9c5cf" strokeWidth="0.7" />)}
        <g clipPath="url(#land)">
          <g filter="url(#soft)">
            <ellipse cx="1120" cy="295" rx="110" ry="45" fill="#eef0d5" />
            <ellipse cx="930" cy="265" rx="45" ry="30" fill="#eef0d5" />
            <ellipse cx="240" cy="335" rx="60" ry="35" fill="#eef0d5" opacity="0.7" />
            <ellipse cx="580" cy="262" rx="60" ry="18" fill="#eef0d5" />
            <ellipse cx="990" cy="530" rx="20" ry="20" fill="#eef0d5" />
          </g>
          <g filter="url(#forest)">
            <g filter="url(#soft)">
              {GREENS.map(([x, y, rx, ry], i) => <ellipse key={i} cx={x} cy={y} rx={rx} ry={ry} fill="#000" />)}
            </g>
          </g>
          <rect x="-20" y="230" width="1320" height="470" filter="url(#fields)" />
        </g>
        <path d={WATER} fill="#aad3df" />
        <g fill="none" stroke="#b7a0bb" strokeWidth="0.8" opacity="0.85">
          {REGIONS.map((d, i) => <path key={i} d={d} />)}
        </g>
        <g fill="none" stroke="#f09db0" strokeWidth="1.1" strokeLinejoin="round">
          {ROADS.map((d, i) => <path key={i} d={d} />)}
        </g>
        <g fill="none" stroke="#a58bad" strokeWidth="1.5" strokeLinejoin="round">
          {BORDERS.map((d, i) => <path key={i} d={d} />)}
        </g>
      </g>
      <g fill="none" stroke="#9790b3" strokeWidth="1.3" strokeLinejoin="round">
        {MARITIME.map((d, i) => <path key={i} d={smooth(d)} />)}
        {CIRCLES.map(([x, y, r], i) => <circle key={i} cx={x} cy={y} r={r} />)}
      </g>
      {[[42, 492, 7], [289, 661, 4], [1128, 293, 6], [1041, 605, 5], [257, 443, 4], [1245, 455, 6], [549, 659, 4]].map(([x, y, r], i) => (
        <circle key={i} cx={x} cy={y} r={r} fill="#ec8aa0" opacity="0.45" />
      ))}
      {DOTS.map(([x, y], i) => <circle key={i} cx={x} cy={y} r="1.6" fill="#fff" stroke="#777" strokeWidth="0.7" />)}
      {CAPITALS.map(([x, y], i) => (
        <g key={i}>
          <circle cx={x} cy={y} r="2.3" fill="#ddd" stroke="#555" strokeWidth="0.6" />
          <circle cx={x} cy={y} r="1.1" fill="#444" />
        </g>
      ))}
      <g className="font-['Noto_Sans',sans-serif] font-medium" textAnchor="middle" stroke="#fff" strokeOpacity="0.55" strokeWidth="1.8" strokeLinejoin="round" paintOrder="stroke">
        {LABELS.map(([t, x, y, k], i) => <text key={i} x={x} y={y} className={LABEL_CLASS[k]}>{t}</text>)}
      </g>
      <g fill="#fff">
        {[177.5, 382.5, 587.5, 792.5, 996.5, 1201.5].map((x) => <rect key={x} x={x - 0.5} y="243" width="1" height="441" opacity="0.7" />)}
        {[259.5, 464.5, 669.5].map((y) => <rect key={y} x="0" y={y - 0.5} width="1280" height="1" opacity="0.4" />)}
      </g>
      {MARKERS.map(([x, y, p]) => (
        <g key={`${x}-${y}`}>
          <circle cx={x} cy={y} r="12" fill="#008000" />
          <path d={slice(x, y, p)} fill="#f00" />
          <text x={x} y={y + 3.2} textAnchor="middle" className="fill-white font-['Open_Sans',sans-serif] text-[9.6px] font-bold">{p}%</text>
        </g>
      ))}
    </svg>
  );
}

function Logo() {
  return (
    <svg viewBox="0 0 65 65" className="size-[65px] shrink-0">
      <circle cx="32.5" cy="32.5" r="32.3" fill="#fff" />
      <path d="M43.5 14C28 3 4 12 4.500 33C5 42 9 48 14 51.500C6 38 8 26 15 18.500C23 11 34 10 43.500 14Z" fill="#0b3567" />
      <path d="M30 13C17 17 11 27 12 37C13 52 28 62 43 57C30 57 18 49 17.500 37C17 28 21 18 30 13Z" fill="#3fb0f7" />
      <path d="M21 41C25 50 34 54.500 43 54C50 53 56 50 59 45.500C53 50 47 51.500 41 51C33 51 26 48 21 41Z" fill="#0b3567" />
      <text x="19" y="35" textLength="43" lengthAdjust="spacingAndGlyphs" className="fill-[#0b3567] font-['Inter',sans-serif] text-[7px] font-bold">TrasparenzAI</text>
    </svg>
  );
}

function Chevron({ className }: { className: string }) {
  return (
    <svg viewBox="0 0 10 6" className={className} fill="none" stroke="currentColor" strokeWidth="1.1">
      <path d="M.7.7 5 5 9.300.7" />
    </svg>
  );
}

function Pin() {
  return (
    <svg viewBox="0 0 12 17" className="h-[17px] w-3" fill="none" stroke="currentColor" strokeWidth="1">
      <path d="M6 16C4.500 12.500 1.200 9.500 1.200 5.600A4.800 4.900 0 0 1 10.800 5.600C10.800 9.500 7.500 12.500 6 16Z" />
      <circle cx="6" cy="5.700" r="2.200" />
    </svg>
  );
}

function Gear() {
  const pts: string[] = [];
  for (let i = 0; i < 8; i++) {
    const c = (i * Math.PI) / 4;
    for (const [da, r] of [[-0.26, 6.2], [-0.17, 7.6], [0.17, 7.6], [0.26, 6.2]]) {
      pts.push(`${(8.500 + r * Math.sin(c + da)).toFixed(2)},${(8.500 - r * Math.cos(c + da)).toFixed(2)}`);
    }
  }
  return (
    <svg viewBox="0 0 17 17" className="size-[17px]" fill="none" stroke="currentColor" strokeWidth="0.9" strokeLinejoin="round">
      <polygon points={pts.join(" ")} />
      <circle cx="8.5" cy="8.5" r="3" />
    </svg>
  );
}

function Select({ label, value, className }: { label: string; value: string; className: string }) {
  return (
    <div className={`flex h-[40px] flex-col border-b border-[#8d8d8d] ${className}`}>
      <div className="h-4 text-[12.500px] leading-4 tracking-[-0.2px] text-[#8a8a8a]">{label}</div>
      <div className="flex items-center justify-between pr-[3px]">
        <span className="text-[12.500px] leading-4 tracking-[-0.14px] whitespace-nowrap text-[#222]">{value}</span>
        <span className="border-x-4 border-t-4 border-x-transparent border-t-[#757575]" />
      </div>
    </div>
  );
}

function CnrMark() {
  return (
    <svg viewBox="0 0 46 46" className="h-[46px] w-[46px]" fill="none" stroke="#1c3a63" strokeWidth="3.7">
      <path d="M29 2.700H25C9 2.700 2 12 2 23C2 36 11 43.200 22 43.200H43V25C43 15 37 9.500 29 9.500C18 9.500 9 15 9 25C9 30 10 33 12.500 36" />
      <path d="M15.500 38V25C15.500 19 20 16.800 29 16.800" />
    </svg>
  );
}

function Emblem() {
  return (
    <svg viewBox="0 0 34 38" className="h-[38px] w-[34px]" fill="none" stroke="#a9aebb">
      <ellipse cx="17" cy="19" rx="14" ry="16" strokeWidth="3.5" strokeDasharray="1.5 1.1" />
      <circle cx="17" cy="18" r="9.500" strokeWidth="1.500" strokeDasharray="2 1.200" />
      <path d="m17 9.500 2.200 6h6.300l-5 3.900 1.900 6.100-5.400-3.700-5.400 3.700 1.900-6.100-5-3.900h6.300Z" strokeWidth="1" />
      <path d="M7 32q10 5 20 0" strokeWidth="3" />
    </svg>
  );
}

function Anac() {
  return (
    <svg viewBox="0 0 146 40" className="h-10 w-[146px]">
      <defs>
        <linearGradient id="anac" x1="0" x2="1" y1="0" y2="0">
          <stop offset="0" stopColor="#3d9edb" />
          <stop offset="0.14" stopColor="#0875bd" />
          <stop offset="0.24" stopColor="#252e66" />
          <stop offset="0.3" stopColor="#3d9edb" />
          <stop offset="0.4" stopColor="#1b5d9f" />
          <stop offset="0.52" stopColor="#51aae1" />
          <stop offset="0.6" stopColor="#252e66" />
          <stop offset="0.74" stopColor="#0875bd" />
          <stop offset="0.88" stopColor="#0875bd" />
          <stop offset="1" stopColor="#252e66" />
        </linearGradient>
      </defs>
      <path d="M0 38C2 33 6 32 13 32L10 38Z" fill="#0875bd" />
      <text x="9" y="37.5" textLength="135" lengthAdjust="spacingAndGlyphs" fill="url(#anac)" stroke="url(#anac)" strokeWidth="1.6" className="font-['Lato',sans-serif] text-[49px] font-black">ANAC</text>
    </svg>
  );
}

export default function App() {
  return (
    <div className="h-[1045px] w-full overflow-hidden bg-[#f7f7f7] font-['Roboto',sans-serif] text-white">
      <header className="bg-[#0066cc]">
        <div className="flex h-[38px] items-stretch bg-[#0059b3] pl-[136px]">
          <div className="flex w-[601px] items-center border-r border-[#337ac2] pt-0.5 text-[11px] tracking-[-0.18px] whitespace-nowrap">
            Protocollo d’intesa tra l’Autorità Nazionale Anticorruzione e il Consiglio Nazionale delle Ricerche - 7 agosto 2023
          </div>
          <div className="flex w-[269px] items-center gap-[39px] border-r border-[#337ac2] pl-[38px] text-[12.500px] tracking-[-0.3px]">
            <a>CREDITS</a>
            <a>DOCUMENTAZIONE</a>
          </div>
          <div className="flex items-center pl-5">
            <span className="grid size-8 place-items-center rounded-full bg-[#008055] text-sm">ID</span>
            <span className="mt-[3px] ml-1.5 text-[11px] tracking-[-0.3px]">IVAN DUCA</span>
            <Chevron className="mt-[3px] ml-1.5 h-[5px] w-2" />
          </div>
        </div>
        <div className="flex h-[89px] items-center px-[104px]">
          <Logo />
          <div className="ml-[13.500px]">
            <div className="text-[21px] leading-[22px] font-bold tracking-[-0.1px]">TrasparenzAI</div>
            <div className="pt-px text-[11px] leading-[15px] tracking-[-0.185px] whitespace-nowrap">
              Piattaforma per l'analisi e la consultazione della trasparenza amministrativa delle Pubbliche Amministrazioni
            </div>
          </div>
          <div className="ml-auto flex items-center gap-[13px] text-[11px] tracking-[-0.25px]">
            <span className="pt-px">Cerca amministrazioni</span>
            <span className="grid h-[39px] w-[38px] place-items-center rounded-full bg-white">
              <svg viewBox="0 0 16 16" className="size-4" fill="none" stroke="#0066cc" strokeWidth="0.9">
                <circle cx="6.500" cy="6.500" r="5.700" />
                <path d="m10.700 10.700 4.600 4.600" />
              </svg>
            </span>
          </div>
        </div>
        <nav className="flex h-10 pl-[104px] text-sm tracking-[-0.19px]">
          <a className="flex w-[233px] items-start gap-1 border-b-2 border-white pt-[7px] pl-[22px] whitespace-nowrap">
            <Pin /><span className="leading-[19px]">Mappa delle Amministrazioni</span>
          </a>
          <a className="flex w-[122px] items-start gap-[5px] pt-[7px] pl-5">
            <Gear /><span className="leading-[19px]">Regole</span>
          </a>
          <a className="flex w-[151px] items-start gap-[5px] pt-[7px] leading-[19px] whitespace-nowrap">
            <span className="tracking-[-0.3px]">Grafici e Mappe</span><Chevron className="mt-2 h-1.5 w-[9px]" />
          </a>
          <a className="flex items-start gap-[5px] pt-[7px] leading-[19px] whitespace-nowrap">
            <span className="tracking-[-0.22px]">Esplora Sezioni</span><Chevron className="mt-2 h-1.5 w-[9px]" />
          </a>
        </nav>
      </header>

      <section className="flex h-[63px] bg-white pt-1 pl-1.5 shadow-[0_3px_12px_rgba(0,0,0,0.25)]">
        <Select label="Controllo" value="Controllo del 07/06/2025, concluso in 12 ore 18 minuti e 48 secondi" className="w-[509px]" />
        <Select label="Nome della Regola" value="Amministrazione trasparente" className="ml-[19px] w-[404px]" />
        <label className="ml-[25px] flex h-[55px] w-[278px] items-center justify-between text-[12.500px] font-medium text-[#5b6f82]">
          <span className="tracking-[-0.28px]">Conserva Zoom e Posizione</span>
          <span className="flex h-[13px] w-[38px] items-center justify-end rounded-full bg-[#e6e9f2]">
            <span className="grid h-[19px] w-[18px] shrink-0 place-items-center rounded-full bg-[#0066cc]">
              <svg viewBox="0 0 10 8" className="h-2 w-2.5" fill="none" stroke="#9cc7f2" strokeWidth="1.100"><path d="m1 4 2.800 2.800L9 1" /></svg>
            </span>
          </span>
        </label>
      </section>

      <main className="relative mt-[13px] h-[441px]">
        <RegionMap />
        <div className="absolute top-2 left-2 flex w-[26px] flex-col rounded-[3px] border border-[#8fb0ba] bg-white text-black">
          <button className="grid h-6 place-items-center border-b border-[#ccc]">
            <svg viewBox="0 0 11 11" className="size-[11px]" stroke="#000" strokeWidth="2"><path d="M5.500 0v11M0 5.500h11" /></svg>
          </button>
          <button className="grid h-6 place-items-center">
            <svg viewBox="0 0 11 11" className="size-[11px]" stroke="#000" strokeWidth="2"><path d="M0 5.500h11" /></svg>
          </button>
        </div>
        <div className="absolute right-0 bottom-0 flex h-[13px] w-[187px] items-center gap-[3px] bg-white/80 pl-1 font-['Liberation_Sans',sans-serif] text-[9.600px] whitespace-nowrap text-[#333]">
          <svg viewBox="0 0 9 6" className="h-1.5 w-[9px]"><path d="M0 0h9v3H0z" fill="#4C7BE1" /><path d="M0 3h9v3H0z" fill="#FFD500" /></svg>
          <span><a className="text-[#0078a8]">Leaflet</a> | © OpenStreetMap contributors</span>
        </div>
      </main>

      <footer>
        <div className="h-[174px] bg-[#17324d] pt-[25px] pl-[102px]">
          <div className="flex items-start">
            <Logo />
            <div className="mt-[14.500px] ml-2 text-[12.500px] leading-[19px] tracking-[-0.185px] whitespace-nowrap">
              <div>TrasparenzAI</div>
              <div>Piattaforma per l'analisi e la consultazione della trasparenza amministrativa delle Pubbliche Amministrazioni</div>
            </div>
          </div>
          <p className="mt-[27px] text-[12.500px] leading-[22px] tracking-[-0.195px] whitespace-nowrap">
            Progetto per la sperimentazione di tecnologie digitali innovative per l'analisi automatica della sezione Amministrazione Trasparente dei siti web delle Pubbliche Amministrazioni e dei soggetti giuridici<br />
            che rientrano nel campo di applicazione del D.Lgs. n. 33/2013.
          </p>
        </div>
        <div className="flex h-[126px] bg-[#e8e6f1] pt-7 pl-[364px]">
          <div className="flex h-[46px] w-[297px] gap-[5px]">
            <CnrMark />
            <div className="pt-[9px] font-['Noto_Sans',sans-serif] text-[16.500px] leading-[20px] font-bold tracking-[-0.35px] whitespace-nowrap text-[#1c3a63]">
              <div>Consiglio Nazionale</div>
              <div><span className="font-normal">delle</span> Ricerche</div>
            </div>
          </div>
          <div className="mt-1 flex h-10">
            <Emblem />
            <span className="mr-[10px] ml-[9px] h-9 w-px bg-[#cfd0de]" />
            <Anac />
            <div className="ml-[6px] font-['Lato',sans-serif] text-[13px] leading-[13.500px] tracking-[0.55px] text-[#2185c9]">
              <div>AUTORITÀ</div>
              <div>NAZIONALE</div>
              <div>ANTICORRUZIONE</div>
            </div>
          </div>
        </div>
        <div className="flex h-[61px] gap-8 bg-[#003366] pt-[21px] pl-[102px] text-[12.500px] leading-5 tracking-[-0.2px]">
          <a className="underline">Note legali</a>
          <a className="underline">Privacy policy</a>
        </div>
      </footer>
    </div>
  );
}
